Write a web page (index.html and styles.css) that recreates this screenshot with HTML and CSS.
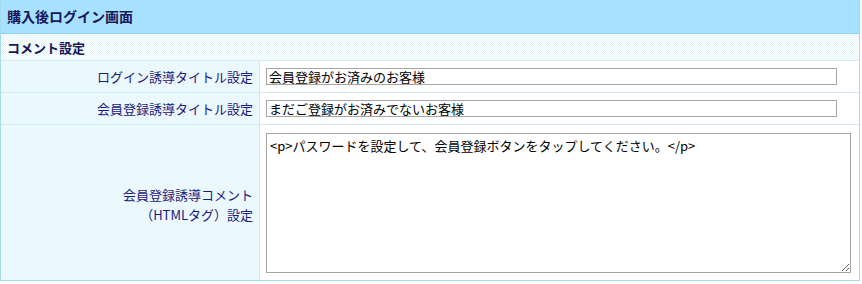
FILE: index.html
```html
<!DOCTYPE html>
<html lang="ja">
<head>
    <meta charset="UTF-8">
    <title>購入後ログイン画面</title>
    <link rel="stylesheet" href="styles.css">
</head>
<body>
    <div class="panel">
        <h2 class="panel-title">購入後ログイン画面</h2>
        <table class="form-table">
            <tr>
                <th class="section" colspan="2">コメント設定</th>
            </tr>
            <tr class="row-input">
                <th class="label">ログイン誘導タイトル設定</th>
                <td class="value"><input type="text" class="text-input" value="会員登録がお済みのお客様"></td>
            </tr>
            <tr class="row-input">
                <th class="label">会員登録誘導タイトル設定</th>
                <td class="value"><input type="text" class="text-input" value="まだご登録がお済みでないお客様"></td>
            </tr>
            <tr class="row-area">
                <th class="label">会員登録誘導コメント<br>（HTMLタグ）設定</th>
                <td class="value"><textarea class="text-area">&lt;p&gt;パスワードを設定して、会員登録ボタンをタップしてください。&lt;/p&gt;</textarea></td>
            </tr>
        </table>
    </div>
</body>
</html>
```

FILE: styles.css
```css
body {
    margin: 0;
    padding: 0;
    background: #fff;
    font-family: "Noto Sans CJK JP", "Liberation Sans", sans-serif;
    font-size: 13px;
    color: #333;
}

.panel {
    width: 858px;
    border: 1px solid #a5dbee;
    border-top: none;
}

.panel-title {
    margin: 0;
    height: 33px;
    line-height: 33px;
    padding-left: 6px;
    background: #a6e1ff;
    border-bottom: 1px solid #92d2ec;
    font-size: 14px;
    font-weight: bold;
    color: #16165a;
}

.form-table {
    width: 100%;
    border-collapse: collapse;
}

.form-table th,
.form-table td {
    padding: 0;
    border-bottom: 1px solid #d2ecf7;
}

.section {
    height: 26px;
    padding-left: 6px !important;
    text-align: left;
    font-size: 13px;
    font-weight: bold;
    color: #16165a;
    background-color: #fff;
    background-image: repeating-conic-gradient(#e4f6fc 0 25%, #fff 0 50%);
    background-size: 2px 2px;
}

.label {
    width: 252px;
    padding-right: 6px !important;
    text-align: right;
    font-weight: normal;
    color: #1a1a80;
    line-height: 20px;
    border-right: 1px solid #d2ecf7;
    background-color: #fff;
    background-image: repeating-conic-gradient(#d6f0fb 0 25%, #fff 0 50%);
    background-size: 2px 2px;
}

.row-input th,
.row-input td {
    height: 31px;
}

.row-area th,
.row-area td {
    height: 155px;
    border-bottom: none;
}

.row-area .label {
    height: 151px;
    padding-top: 4px !important;
}

.value {
    padding-left: 6px !important;
    background: #fff;
}

.text-input {
    display: block;
    box-sizing: border-box;
    width: 571px;
    height: 17px;
    margin: 0;
    padding: 0 2px;
    border: 1px solid #a5a5a5;
    font-family: "Noto Sans CJK JP", sans-serif;
    font-size: 13px;
    line-height: 15px;
    color: #000;
}

.text-area {
    display: block;
    box-sizing: border-box;
    width: 585px;
    height: 140px;
    margin: 0;
    padding: 3px 3px;
    border: 1px solid #a5a5a5;
    font-family: "Noto Sans CJK JP", sans-serif;
    font-size: 13px;
    line-height: 18px;
    color: #000;
}
```
